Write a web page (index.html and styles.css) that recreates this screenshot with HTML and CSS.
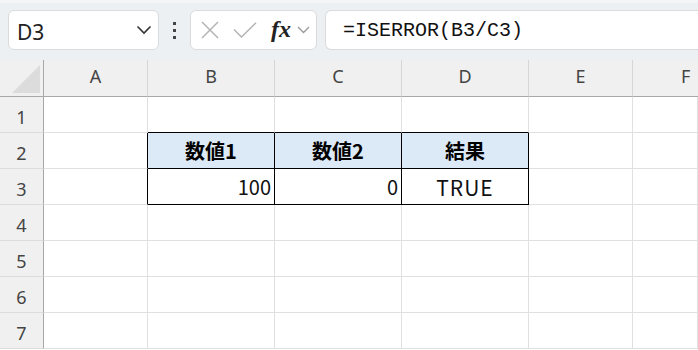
FILE: index.html
```html
<!DOCTYPE html>
<html lang="ja">
<head>
<meta charset="UTF-8">
<title>ISERROR</title>
<link rel="stylesheet" href="styles.css">
</head>
<body>
<div class="toolbar">
  <div class="namebox">
    <span>D3</span>
    <svg class="chev" width="16" height="10" viewBox="0 0 16 10"><path d="M1.5 1.5 L8 8 L14.5 1.5" fill="none" stroke="#333" stroke-width="1.6"/></svg>
  </div>
  <div class="grip"><i></i><i></i><i></i></div>
  <div class="fbuttons">
    <svg width="18" height="18" viewBox="0 0 18 18"><path d="M1 1 L17 17 M17 1 L1 17" stroke="#b4b4b4" stroke-width="1.5"/></svg>
    <svg width="24" height="16" viewBox="0 0 24 16"><path d="M1 7.5 L8.5 15 L23 0.8" fill="none" stroke="#b4b4b4" stroke-width="1.5"/></svg>
    <span class="fx">fx</span>
    <svg width="13" height="8" viewBox="0 0 13 8"><path d="M1 1 L6.5 6.5 L12 1" fill="none" stroke="#999" stroke-width="1.3"/></svg>
  </div>
  <div class="formula">=ISERROR(B3/C3)</div>
</div>

<div class="sheet">
  <div class="hd corner"><span class="tri"></span></div>
  <div class="hd col">A</div>
  <div class="hd col">B</div>
  <div class="hd col">C</div>
  <div class="hd col">D</div>
  <div class="hd col">E</div>
  <div class="hd col last">F</div>

  <div class="hd row">1</div>
  <div class="c"></div><div class="c tb"></div><div class="c tb"></div><div class="c tb"></div><div class="c"></div><div class="c"></div>

  <div class="hd row">2</div>
  <div class="c tl"></div>
  <div class="c t th">数値1</div>
  <div class="c t th">数値2</div>
  <div class="c t th">結果</div>
  <div class="c"></div><div class="c"></div>

  <div class="hd row">3</div>
  <div class="c tl"></div>
  <div class="c t num">100</div>
  <div class="c t num">0</div>
  <div class="c t mid">TRUE</div>
  <div class="c"></div><div class="c"></div>

  <div class="hd row">4</div>
  <div class="c"></div><div class="c"></div><div class="c"></div><div class="c"></div><div class="c"></div><div class="c"></div>
  <div class="hd row">5</div>
  <div class="c"></div><div class="c"></div><div class="c"></div><div class="c"></div><div class="c"></div><div class="c"></div>
  <div class="hd row">6</div>
  <div class="c"></div><div class="c"></div><div class="c"></div><div class="c"></div><div class="c"></div><div class="c"></div>
  <div class="hd row">7</div>
  <div class="c"></div><div class="c"></div><div class="c"></div><div class="c"></div><div class="c"></div><div class="c"></div>
</div>
</body>
</html>
```

FILE: styles.css
```css
body {
  margin: 0;
  width: 698px;
  height: 350px;
  overflow: hidden;
  background: #ffffff;
  font-family: "Noto Sans", "Noto Sans CJK JP", sans-serif;
}
.toolbar {
  height: 60px;
  box-sizing: border-box;
  padding: 7px 0 10px 8px;
  display: flex;
  align-items: stretch;
  background: #edf0f2;
  border-top: 3px solid #f4f5f6;
}
.namebox {
  width: 151px;
  box-sizing: border-box;
  background: #fff;
  border: 1px solid #d9dbdd;
  border-radius: 6px;
  display: flex;
  align-items: center;
  justify-content: space-between;
  padding: 0 6px 0 8px;
  font-size: 21px;
  color: #222;
}
.namebox span {
  padding-top: 3px;
}
.grip {
  width: 31px;
  display: flex;
  flex-direction: column;
  align-items: center;
  justify-content: center;
  gap: 4px;
}
.grip i {
  width: 3px;
  height: 3px;
  background: #444;
  display: block;
}
.fbuttons {
  width: 127px;
  box-sizing: border-box;
  background: #fff;
  border: 1px solid #d9dbdd;
  border-radius: 6px;
  display: flex;
  align-items: center;
  padding: 0 4px 0 10px;
  gap: 14px;
}
.fbuttons .fx {
  font-family: "Liberation Serif", serif;
  font-style: italic;
  font-weight: bold;
  font-size: 24px;
  color: #222;
  margin-right: -8px;
  padding-bottom: 2px;
}
.formula {
  flex: 1;
  margin-left: 8px;
  background: #fff;
  border: 1px solid #d9dbdd;
  border-right: none;
  border-radius: 6px 0 0 6px;
  display: flex;
  align-items: center;
  padding-left: 17px;
  font-family: "Liberation Mono", monospace;
  font-size: 20px;
  color: #111;
}
.sheet {
  display: grid;
  grid-template-columns: 44px 104px 127px 127px 127px 104px 1fr;
  grid-template-rows: 37px repeat(7, 36px);
}
.hd {
  background: #f0f0f0;
  color: #444;
  font-size: 18px;
  display: flex;
  align-items: center;
  justify-content: center;
  box-sizing: border-box;
}
.col {
  border-right: 1px solid #d6d6d6;
  border-bottom: 1px solid #a8a8a8;
  padding-bottom: 5px;
}
.col.last {
  border-right: none;
  justify-content: flex-start;
  padding-left: 48px;
}
.corner {
  border-right: 1px solid #a8a8a8;
  border-bottom: 1px solid #a8a8a8;
  position: relative;
}
.tri {
  position: absolute;
  right: 3px;
  bottom: 3px;
  width: 28px;
  height: 28px;
  background: #dcdcdc;
  clip-path: polygon(100% 0, 100% 100%, 0 100%);
}
.row {
  border-right: 1px solid #a8a8a8;
  border-bottom: 1px solid #dcdcdc;
  padding-top: 4px;
}
.c {
  box-sizing: border-box;
  border-right: 1px solid #e0e0e0;
  border-bottom: 1px solid #e0e0e0;
  font-family: "Noto Sans CJK JP", sans-serif;
  font-size: 20px;
  color: #111;
  display: flex;
  align-items: center;
}
.tb {
  border-bottom-color: #000;
}
.tl {
  border-right-color: #000;
}
.t {
  border-right-color: #000;
  border-bottom-color: #000;
}
.th {
  background: #dce9f6;
  font-weight: bold;
  justify-content: center;
  color: #000;
}
.num {
  justify-content: flex-end;
  padding-right: 3px;
}
.mid {
  justify-content: center;
  font-size: 21px;
  letter-spacing: 1px;
}
```
